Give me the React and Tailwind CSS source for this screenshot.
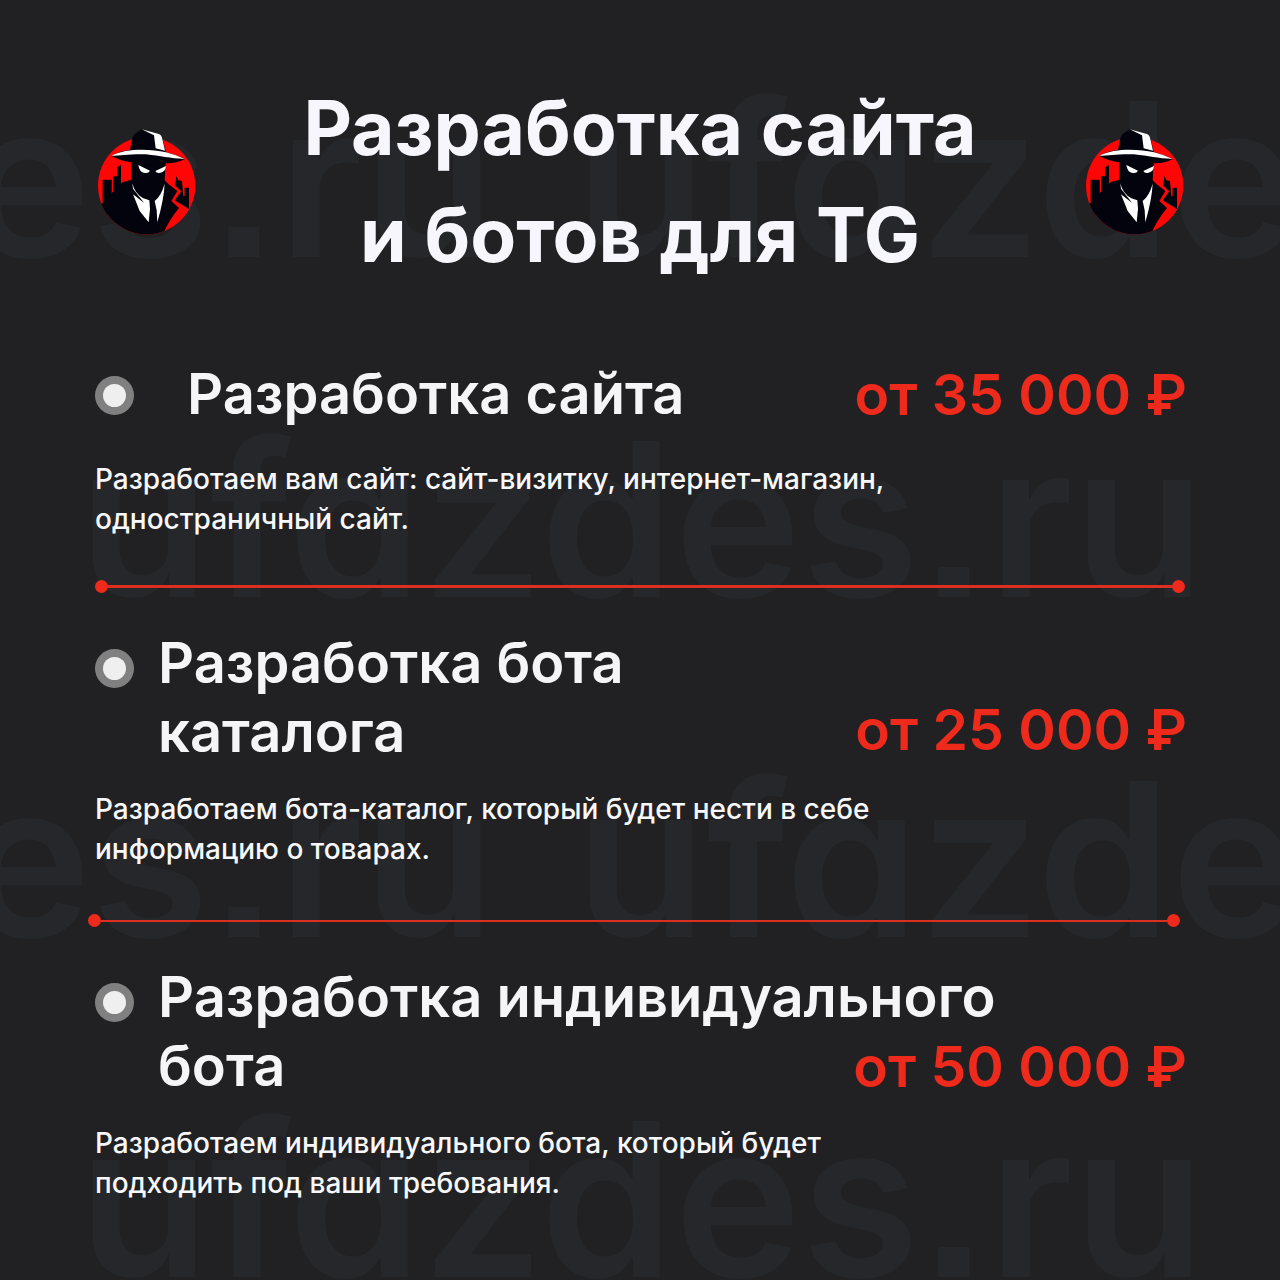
const services = [
  {
    title: ["Разработка сайта"],
    price: "от 35 000 ₽",
    text: ["Разработаем вам сайт: сайт-визитку, интернет-магазин,", "одностраничный сайт."],
    titleClass: "ml-[53px]",
    bulletClass: "mt-4",
    textClass: "mt-[30px]",
    priceClass: "",
  },
  {
    title: ["Разработка бота", "каталога"],
    price: "от 25 000 ₽",
    text: ["Разработаем бота-каталог, который будет нести в себе", "информацию о товарах."],
    titleClass: "ml-6",
    bulletClass: "mt-5",
    textClass: "mt-[22px]",
    priceClass: "pb-[3px]",
  },
  {
    title: ["Разработка индивидуального", "бота"],
    price: "от 50 000 ₽",
    text: ["Разработаем индивидуального бота, который будет", "подходить под ваши требования."],
    titleClass: "ml-6",
    bulletClass: "mt-5",
    textClass: "mt-[22px]",
    priceClass: "",
  },
];

function Logo() {
  return (
    <svg viewBox="30 20 300 324" className="h-[108px] w-[100px] shrink-0" role="img" aria-label="ufazdes.ru">
      <defs>
        <clipPath id="disc">
          <circle cx="182" cy="196" r="146" />
        </clipPath>
      </defs>
      <circle cx="182" cy="196" r="146" fill="#ff0505" />
      <g clipPath="url(#disc)" fill="#02030c">
        <path d="M50 260V178H77V222L81 221V168H93V141L105 134V190L120 182V280H50Z" />
        <path d="M266 240L286 213L268 196L271 166L277 180L288 182L292 228L296 227V202H309V266Z" />
        <path d="M30 244L52 250L80 215L110 186L136 178L137 110H240L236 180L248 192L274 212L256 242L279 263Q248 300 230 344H30Z" />
      </g>
      <path d="M130 98L139 54Q143 41 155 35L167 27L219 41Q228 46 231 60L240 98Z" fill="#02030c" />
      <path d="M167 27L219 41Q227 44 229 56L237 91L209 84L204 45Z" fill="#fff" />
      <path d="M76 107C111 84 178 80 236 94Q270 103 296 116Q270 130 240 129C221 135 157 135 136 126Q104 122 76 107Z" fill="#02030c" />
      <path d="M76 106C120 84 190 85 240 96Q272 104 296 116C250 114 225 107 180 102C135 100 105 106 76 106Z" fill="#fff" />
      <path d="M157 134L192 151Q188 160 176 158Q160 156 157 134Z" fill="#fff" />
      <path d="M240 137L208 152Q212 160 223 157Q238 155 240 137Z" fill="#fff" />
      <path d="M139 189Q146 220 172 234L190 240L192 266L188 306L161 272L141 222L164 240L174 247L141 205Z" fill="#fff" />
      <path d="M236 190Q234 236 214 306L212 270L206 242Q225 228 236 190Z" fill="#fff" />
    </svg>
  );
}

function Bullet({ className }) {
  return (
    <span
      aria-hidden="true"
      className={`flex size-[39px] shrink-0 items-center justify-center rounded-full bg-[#808080] ${className}`}
    >
      <span className="size-[23px] rounded-full bg-[#efefef]" />
    </span>
  );
}

function Divider({ className, lineClass }) {
  return (
    <div role="separator" className={`flex h-[13px] items-center ${className}`}>
      <span className="size-[13px] shrink-0 rounded-full bg-[#ed2a1c]" />
      <span className={`grow bg-[#dc2f1f] ${lineClass}`} />
      <span className="size-[13px] shrink-0 rounded-full bg-[#ed2a1c]" />
    </div>
  );
}

function Service({ item }) {
  return (
    <section>
      <div className="grid">
        <div className="col-start-1 row-start-1 flex items-start">
          <Bullet className={item.bulletClass} />
          <h2 className={`text-[56px] leading-[69px] font-semibold whitespace-nowrap text-[#f5f5f7] ${item.titleClass}`}>
            {item.title.map((line) => (
              <span key={line} className="block">{line}</span>
            ))}
          </h2>
        </div>
        <p className={`col-start-1 row-start-1 -mr-[2px] self-end justify-self-end text-[57px] leading-[69px] font-semibold whitespace-nowrap text-[#ed2a1c] ${item.priceClass}`}>
          {item.price}
        </p>
      </div>
      <p className={`text-[28px] leading-10 font-medium text-[#f8f8fa] ${item.textClass}`}>
        {item.text.map((line) => (
          <span key={line} className="block">{line}</span>
        ))}
      </p>
    </section>
  );
}

function Watermark() {
  return (
    <div
      aria-hidden="true"
      className="absolute inset-0 overflow-hidden pt-[9px] text-[215px] leading-[340px] font-semibold whitespace-nowrap text-[#25272b] select-none [font-feature-settings:'cv11','ss07']"
    >
      {[0, 1, 2, 3].map((row) => (
        <div key={row} className={row % 2 ? "pl-[78px]" : "-ml-[632px] flex gap-[80px]"}>
          <span>ufazdes.ru</span>
          {row % 2 === 0 && <span>ufazdes.ru</span>}
        </div>
      ))}
    </div>
  );
}

export default function App() {
  return (
    <div className="relative min-h-screen overflow-hidden bg-[#212123] font-['Inter',sans-serif]">
      <Watermark />
      <main className="relative px-[95px] pt-[74px] pb-[74px]">
        <header className="mb-[72px] flex items-center justify-between px-px">
          <Logo />
          <h1 className="text-center text-[75px] leading-[107px] font-bold text-[#f7f6fc]">
            Разработка сайта
            <br />и ботов для TG
          </h1>
          <Logo />
        </header>
        <Service item={services[0]} />
        <Divider className="mt-[41px] mb-9" lineClass="h-[3px]" />
        <Service item={services[1]} />
        <Divider className="-ml-[7px] mt-[45px] mb-9 mr-[5px]" lineClass="h-[2px]" />
        <Service item={services[2]} />
      </main>
    </div>
  );
}
